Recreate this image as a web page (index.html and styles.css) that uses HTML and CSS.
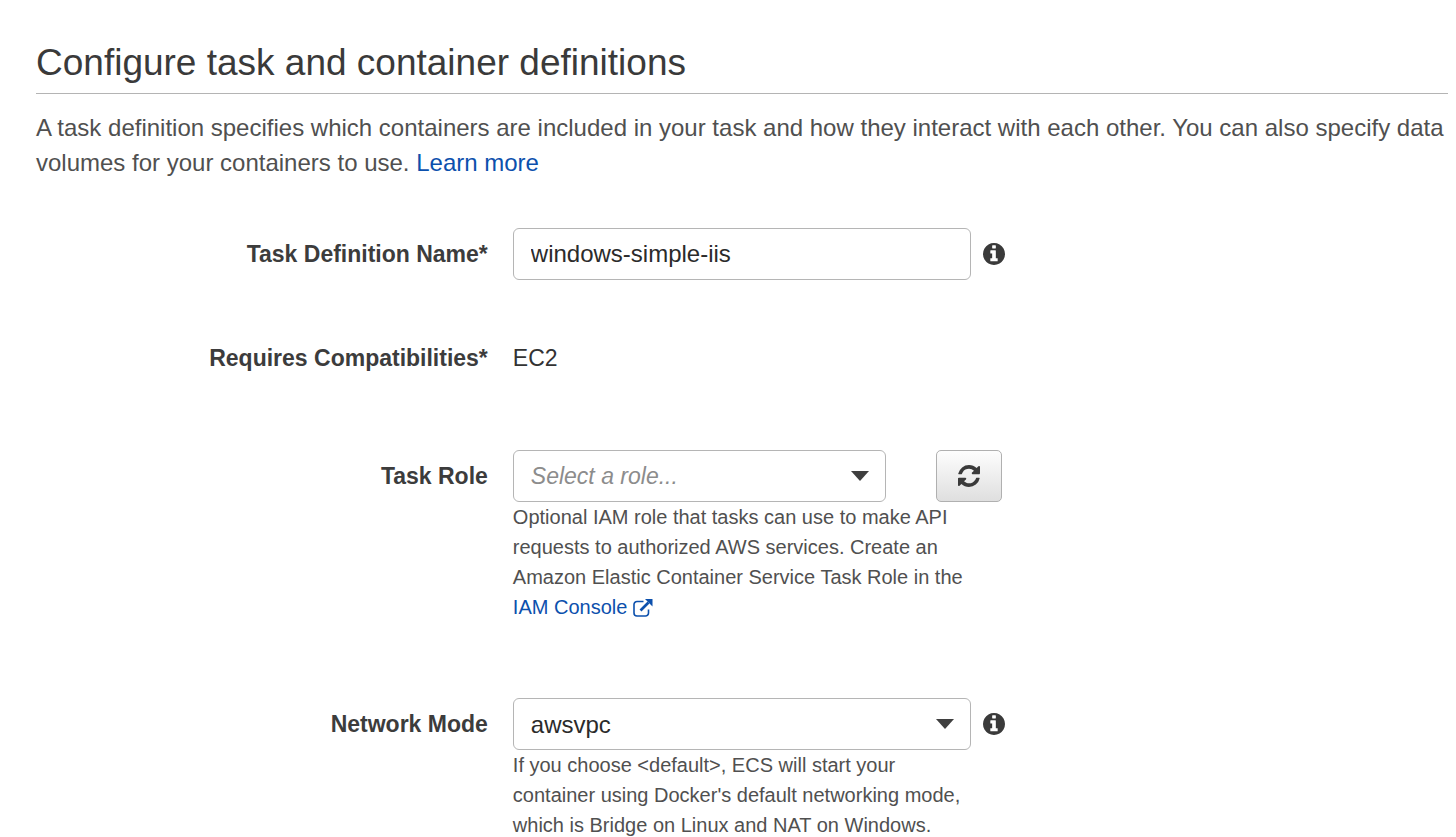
FILE: index.html
```
<!DOCTYPE html>
<html lang="en">
  <head>
    <meta charset="UTF-8" />
    <meta name="viewport" content="width=device-width, initial-scale=1.0" />
    <title>Configure task and container definitions</title>
    <link rel="stylesheet" href="styles.css">
  </head>
  <body>

    <h1>Configure task and container definitions</h1>

    <p class="intro">
      A task definition specifies which containers are included in your task and how they interact with each other. You can also specify data volumes for your containers to use. <a href="#">Learn more</a>
    </p>

    <form class="task-form">
      <div class="field">
        <label class="field-label" for="taskName">Task Definition Name*</label>
        <div class="field-body">
          <div class="control-row">
            <input class="control" type="text" id="taskName" value="windows-simple-iis" />
            <button class="info-button" type="button" aria-label="About task definition name">
              <svg class="icon" viewBox="128 128 1536 1536"><path d="M1152 1376v-160q0-14-9-23t-23-9h-96v-512q0-14-9-23t-23-9h-320q-14 0-23 9t-9 23v160q0 14 9 23t23 9h96v320h-96q-14 0-23 9t-9 23v160q0 14 9 23t23 9h448q14 0 23-9t9-23zm-128-896v-160q0-14-9-23t-23-9h-192q-14 0-23 9t-9 23v160q0 14 9 23t23 9h192q14 0 23-9t9-23zm640 416q0 209-103 385.5t-279.5 279.5-385.5 103-385.5-103-279.5-279.5-103-385.5 103-385.5 279.5-279.5 385.5-103 385.5 103 279.5 279.5 103 385.5z"/></svg>
            </button>
          </div>
        </div>
      </div>

      <div class="field field-static">
        <span class="field-label">Requires Compatibilities*</span>
        <div class="field-body">
          <span class="static-value">EC2</span>
        </div>
      </div>

      <div class="field">
        <label class="field-label" for="taskRole">Task Role</label>
        <div class="field-body">
          <div class="control-row">
            <div class="select-wrap select-role">
              <select class="control placeholder" id="taskRole">
                <option>Select a role...</option>
              </select>
            </div>
            <button class="refresh-button" type="button" aria-label="Refresh roles">
              <svg class="icon" viewBox="128 128 1536 1536"><path d="M1639 1056q0 5-1 7-64 268-268 434.5t-478 166.5q-146 0-282.5-55t-243.5-157l-129 129q-19 19-45 19t-45-19-19-45v-448q0-26 19-45t45-19h448q26 0 45 19t19 45-19 45l-137 137q71 66 161 102t187 36q134 0 250-65t186-179q11-17 53-117 8-23 30-23h192q13 0 22.5 9.5t9.5 22.5zm25-800v448q0 26-19 45t-45 19h-448q-26 0-45-19t-19-45 19-45l138-138q-148-137-349-137-134 0-250 65t-186 179q-11 17-53 117-8 23-30 23h-199q-13 0-22.5-9.5t-9.5-22.5v-7q65-268 270-434.5t480-166.5q146 0 284 55.5t245 156.5l130-129q19-19 45-19t45 19 19 45z"/></svg>
            </button>
          </div>
          <p class="help">
            Optional IAM role that tasks can use to make API requests to authorized AWS services. Create an Amazon Elastic Container Service Task Role in the
            <a href="#">IAM Console
              <svg class="external-icon" viewBox="0 0 20 18"><path d="M10.5 2.500H4a3 3 0 0 0-3 3V14a3 3 0 0 0 3 3h8.500a3 3 0 0 0 3-3v-3.500" fill="none" stroke="currentColor" stroke-width="1.600"/><path d="M7.500 11.500L15.500 3.500" stroke="currentColor" stroke-width="2.600"/><path d="M12 0h7.500v7.500z" fill="currentColor"/></svg></a>
          </p>
        </div>
      </div>

      <div class="field">
        <label class="field-label" for="networkMode">Network Mode</label>
        <div class="field-body">
          <div class="control-row">
            <div class="select-wrap">
              <select class="control" id="networkMode">
                <option>awsvpc</option>
              </select>
            </div>
            <button class="info-button" type="button" aria-label="About network mode">
              <svg class="icon" viewBox="128 128 1536 1536"><path d="M1152 1376v-160q0-14-9-23t-23-9h-96v-512q0-14-9-23t-23-9h-320q-14 0-23 9t-9 23v160q0 14 9 23t23 9h96v320h-96q-14 0-23 9t-9 23v160q0 14 9 23t23 9h448q14 0 23-9t9-23zm-128-896v-160q0-14-9-23t-23-9h-192q-14 0-23 9t-9 23v160q0 14 9 23t23 9h192q14 0 23-9t9-23zm640 416q0 209-103 385.5t-279.5 279.5-385.5 103-385.5-103-279.5-279.5-103-385.5 103-385.5 279.5-279.5 385.5-103 385.5 103 279.5 279.5 103 385.5z"/></svg>
            </button>
          </div>
          <p class="help">
            If you choose &lt;default&gt;, ECS will start your container using Docker's default networking mode, which is Bridge on Linux and NAT on Windows.
          </p>
        </div>
      </div>
    </form>

  </body>
</html>
```

FILE: styles.css
```
* {
  box-sizing: border-box;
}

body {
  margin: 0;
  padding: 37px 8px 0 36px;
  background-color: white;
  color: #444;
  font-family: "Liberation Sans", Arial, sans-serif;
  font-size: 24px;
}

h1 {
  margin: 0;
  padding-bottom: 4px;
  border-bottom: 1px solid #b4b4b4;
  color: #3a3a3a;
  font-size: 37px;
  font-weight: normal;
  line-height: 52px;
}

a {
  color: #0c50ad;
  text-decoration: none;
}

a:hover {
  text-decoration: underline;
}

.intro {
  margin: 16px 0 48px;
  color: #505050;
  line-height: 35px;
}

.field {
  display: grid;
  grid-template-columns: 32% 1fr;
  column-gap: 25px;
  margin-bottom: 76px;
}

.field:first-child {
  margin-bottom: 52px;
}

.field:last-child {
  margin-bottom: 0;
}

.field-static {
  margin-bottom: 66px;
}

.field-label {
  color: #3c3c3c;
  font-size: 23px;
  font-weight: bold;
  line-height: 52px;
  text-align: right;
}

.static-value {
  color: #333;
  font-size: 23px;
  line-height: 52px;
}

.control-row {
  display: flex;
  align-items: center;
}

.control {
  width: 458px;
  height: 52px;
  padding: 0 17px;
  border: 1px solid #b5b5b5;
  border-radius: 6px;
  background-color: white;
  color: #2b2b2b;
  font-family: inherit;
  font-size: 24px;
}

.select-wrap {
  position: relative;
}

.select-wrap .control {
  display: block;
  appearance: none;
}

/* drop-down arrow */
.select-wrap::after {
  content: "";
  position: absolute;
  top: 21px;
  right: 17px;
  border-top: 10px solid #3f3f3f;
  border-left: 9px solid transparent;
  border-right: 9px solid transparent;
  pointer-events: none;
}

.select-role .control {
  width: 373px;
}

.control.placeholder {
  color: #8c8c8c;
  font-size: 23px;
  font-style: italic;
}

.icon {
  display: block;
  width: 22px;
  height: 22px;
  fill: #3a3a3a;
}

.info-button {
  margin-left: 12px;
  padding: 0;
  border: none;
  background: none;
  cursor: pointer;
}

.refresh-button {
  display: flex;
  align-items: center;
  justify-content: center;
  width: 66px;
  height: 52px;
  margin-left: 50px;
  padding: 0;
  border: 1px solid #b0b0b0;
  border-radius: 5px;
  background: linear-gradient(#fdfdfd, #dfdfdf);
  cursor: pointer;
}

.help {
  max-width: 458px;
  margin: 0;
  color: #505050;
  font-size: 20px;
  line-height: 30px;
}

.external-icon {
  width: 20px;
  height: 18px;
  vertical-align: -3px;
}
```
